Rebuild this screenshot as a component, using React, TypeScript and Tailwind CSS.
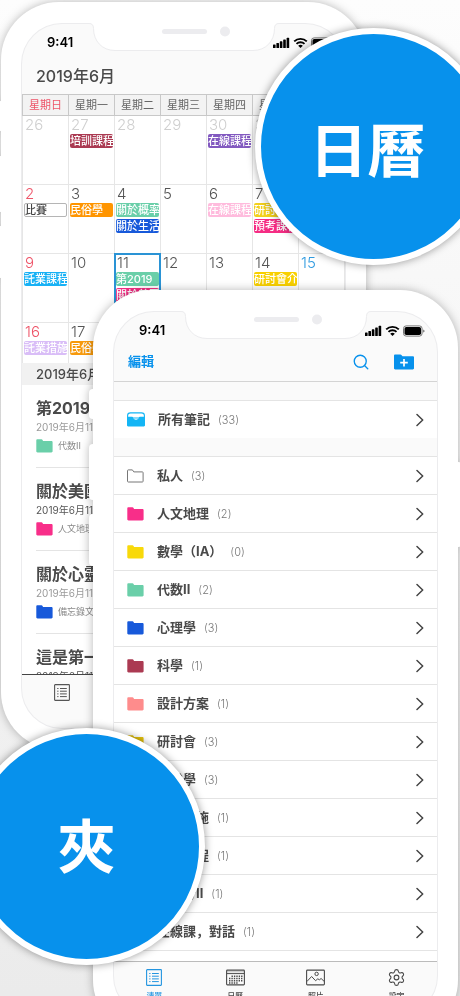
import type { ReactNode } from "react";
import { Search, Settings } from "lucide-react";

type Tag = { label: string; tone: string };
type Day = { n: number; out?: boolean; today?: boolean; tags?: Tag[] };

const weekdays = ["星期日", "星期一", "星期二", "星期三", "星期四", "星期五", "星期六"];

const weeks: Day[][] = [
  [
    { n: 26, out: true },
    { n: 27, out: true, tags: [{ label: "培訓課程", tone: "bg-[#ab3a52] text-white" }] },
    { n: 28, out: true },
    { n: 29, out: true },
    { n: 30, out: true, tags: [{ label: "在線課程", tone: "bg-[#8259c0] text-white" }] },
    { n: 31, out: true },
    { n: 1 },
  ],
  [
    { n: 2, tags: [{ label: "比賽", tone: "border border-[#b5b5b5] bg-white text-[#444]" }] },
    { n: 3, tags: [{ label: "民俗學", tone: "bg-[#ff9500] text-white" }] },
    {
      n: 4,
      tags: [
        { label: "關於概率", tone: "bg-[#6acfa9] text-white" },
        { label: "關於生活", tone: "bg-[#1759da] text-white" },
      ],
    },
    { n: 5 },
    { n: 6, tags: [{ label: "在線課程", tone: "bg-[#ffbbdd] text-white" }] },
    {
      n: 7,
      tags: [
        { label: "研討會介", tone: "bg-[#f3d01c] text-white" },
        { label: "預考課程", tone: "bg-[#f52d84] text-white" },
      ],
    },
    { n: 8 },
  ],
  [
    { n: 9, tags: [{ label: "託業課程", tone: "bg-[#17b1f5] text-white" }] },
    { n: 10 },
    {
      n: 11,
      today: true,
      tags: [
        { label: "第2019", tone: "bg-[#6acfa9] text-white" },
        { label: "關於美國", tone: "bg-[#f52d84] text-white" },
      ],
    },
    { n: 12 },
    { n: 13 },
    { n: 14, tags: [{ label: "研討會介", tone: "bg-[#f8d000] text-white" }] },
    { n: 15 },
  ],
  [
    { n: 16, tags: [{ label: "託業措施", tone: "bg-[#d9bdf7] text-white" }] },
    { n: 17, tags: [{ label: "民俗學", tone: "bg-[#f79a0c] text-white" }] },
    { n: 18 },
    { n: 19 },
    { n: 20 },
    { n: 21 },
    { n: 22 },
  ],
];

const notes = [
  { title: "第2019屆科學", date: "2019年6月11日", folder: "代数II", color: "text-[#6acfa9]", dateColor: "text-[#9a9a9a]" },
  { title: "關於美國歷史", date: "2019年6月11日", folder: "人文地理", color: "text-[#f82e89]", dateColor: "text-[#555]" },
  { title: "關於心靈成長", date: "2019年6月11日", folder: "備忘錄文", color: "text-[#1759da]", dateColor: "text-[#9a9a9a]" },
  { title: "這是第一次", date: "2019年6月11日", folder: "科學", color: "text-[#ab3a52]", dateColor: "text-[#555]" },
];

const folders = [
  { name: "私人", count: 3, color: "" },
  { name: "人文地理", count: 2, color: "text-[#f82e89]" },
  { name: "數學（IA）", count: 0, color: "text-[#f8d90a]" },
  { name: "代数II", count: 2, color: "text-[#6acfa9]" },
  { name: "心理學", count: 3, color: "text-[#1759da]" },
  { name: "科學", count: 1, color: "text-[#ab3a52]" },
  { name: "設計方案", count: 1, color: "text-[#fe8c8c]" },
  { name: "研討會", count: 3, color: "text-[#e3c00c]" },
  { name: "民俗學", count: 3, color: "text-[#ff9500]" },
  { name: "託業措施", count: 1, color: "text-[#d9bdf7]" },
  { name: "託業課程", count: 1, color: "text-[#17b1f5]" },
  { name: "微積分II", count: 1, color: "text-[#8259c0]" },
  { name: "在線課，對話", count: 1, color: "text-[#ffbbdd]" },
  { name: "在線課程", count: 1, color: "text-[#8259c0]" },
];

function FolderIcon({ color }: { color: string }) {
  return (
    <svg viewBox="0 0 17 14" className={`h-[14px] w-[17px] shrink-0 ${color || "text-[#777]"}`} aria-hidden="true">
      <path
        d={
          color
            ? "M1.2.3h4.300c.5 0 .8.2 1 .6l.6 1h8.300c.7 0 1.200.5 1.200 1.200v9.200c0 .7-.5 1.200-1.200 1.200H1.500C.8 13.500.3 13 .3 12.300V1.300C.3.700.600.3 1.200.3z"
            : "M1.200.9h4.200l1.400 2h8.600c.4 0 .7.3.7.7v8.700c0 .4-.3.7-.7.7H1.200c-.4 0-.7-.3-.7-.7V1.600c0-.4.3-.7.7-.7z"
        }
        fill={color ? "currentColor" : "none"}
        stroke={color ? "none" : "currentColor"}
      />
    </svg>
  );
}

function ListIcon() {
  return (
    <svg viewBox="0 0 16 17" className="h-[17px] w-4" fill="none" stroke="currentColor" aria-hidden="true">
      <rect x="0.6" y="0.6" width="14.8" height="15.8" rx="0.6" strokeWidth="1.1" />
      <path d="M3.200 4.500h1.300M3.200 7.200h1.300M3.200 9.900h1.300M3.200 12.600h1.300M6 4.500h6.800M6 7.200h6.800M6 9.900h6.800M6 12.600h6.800" />
    </svg>
  );
}

function CalendarIcon() {
  return (
    <svg viewBox="0 0 19 17" className="h-[17px] w-[19px]" fill="none" stroke="currentColor" aria-hidden="true">
      <rect x="0.6" y="1.1" width="17.8" height="14.8" rx="0.8" strokeWidth="1.1" />
      <path d="M.6 4.600h17.800" />
      <path d="M1 2.800h17" strokeOpacity="0.35" />
      <path d="M5.500 7.200h11M3 9.500h13.500M3 11.800h13.500M3 14h9" strokeWidth="1.4" strokeDasharray="1.400 1" />
    </svg>
  );
}

function PhotoIcon() {
  return (
    <svg viewBox="0 0 19 17" className="h-[17px] w-[19px]" fill="none" stroke="currentColor" aria-hidden="true">
      <rect x="0.6" y="1.1" width="17.8" height="14.8" rx="0.8" strokeWidth="1.1" />
      <circle cx="10.600" cy="4.900" r="1.700" />
      <path d="M.8 12.600 5.600 7.500l4 4.200 2.200-1.900 1.600 1 1.700-1.300 3.200 3" strokeLinejoin="round" />
    </svg>
  );
}

function StatusIcons() {
  return (
    <svg viewBox="0 0 60 12" className="h-3 w-[60px]" aria-label="訊號與電量">
      <rect x="0" y="7.500" width="2.600" height="3.500" rx="0.6" />
      <rect x="3.400" y="6" width="2.600" height="5" rx="0.6" />
      <rect x="6.800" y="4.300" width="2.600" height="6.700" rx="0.6" />
      <rect x="10.200" y="2.500" width="2.600" height="8.500" rx="0.6" />
      <rect x="13.600" y="0.800" width="2.600" height="10.200" rx="0.6" />
      <g fill="none" stroke="#000" strokeWidth="1.900">
        <path d="M21.200 4.400c3.500-3.400 9.100-3.400 12.600 0" />
        <path d="M23.500 6.900c2.200-2.200 5.800-2.200 8 0" />
      </g>
      <path d="M25.200 8.700c1.300-1.200 3.300-1.200 4.600 0l-2.300 2.400z" />
      <rect x="38.500" y="0.900" width="18.600" height="10.200" rx="2.600" fill="none" stroke="#777" />
      <rect x="39.500" y="1.900" width="16.600" height="8.200" rx="1.800" />
      <path d="M58.300 4.400c1.600.5 1.600 2.700 0 3.200z" fill="#555" />
    </svg>
  );
}

function Chevron() {
  return (
    <svg viewBox="0 0 8 14" className="h-[14px] w-2 text-[#444]" fill="none" stroke="currentColor" strokeWidth="1.500" aria-hidden="true">
      <path d="M1 1.500 6.700 7 1 12.500" strokeLinecap="round" strokeLinejoin="round" />
    </svg>
  );
}

function Phone({ className, children }: { className: string; children: ReactNode }) {
  return (
    <section className={`relative [grid-area:1/1] drop-shadow-[0_0_5px_rgba(0,0,0,0.28)] ${className}`}>
      {/* side keys */}
      <div className="absolute top-[99px] -left-1 h-[30px] w-2 rounded-l bg-white" />
      <div className="absolute top-[154px] -left-1 h-[56px] w-2 rounded-l bg-white" />
      <div className="absolute top-[224px] -left-1 h-[52px] w-2 rounded-l bg-white" />
      <div className="absolute top-[172px] -right-1 h-[85px] w-2 rounded-r bg-white" />
      <div className="relative flex h-[748px] flex-col rounded-[58px] bg-white px-[21px] py-[22px]">
        <div className="flex min-h-0 flex-1 flex-col overflow-hidden rounded-[40px] bg-[#fafafa] ring-1 ring-[#ececee]">
          <div className="flex h-[38px] shrink-0 items-center justify-between pr-3 pl-[25px]">
            <span className="text-[13px] font-semibold text-black">9:41</span>
            <StatusIcons />
          </div>
          {children}
        </div>
        {/* notch */}
        <svg viewBox="0 0 190 30" className="absolute top-[20px] left-1/2 h-[30px] w-[190px] -translate-x-1/2" aria-hidden="true">
          <path d="M0 0v1.500c3 0 4.500 1.500 4.500 5C4.500 19 13 28.500 26 28.500h138c13 0 21.500-9.500 21.500-22 0-3.500 1.500-5 4.500-5V0z" fill="#fff" />
          <path d="M0 1.500c3 0 4.500 1.500 4.500 5C4.500 19 13 28.500 26 28.500h138c13 0 21.500-9.500 21.500-22 0-3.500 1.500-5 4.500-5" fill="none" stroke="#ececee" />
          <rect x="73" y="7" width="45" height="5" rx="2.500" fill="#ececef" />
          <circle cx="136" cy="9.500" r="5" fill="#ececef" />
        </svg>
      </div>
    </section>
  );
}

function DayCell({ day, index }: { day: Day; index: number }) {
  let color = "text-[#555]";
  if (day.out) color = "text-[#cfcfcf]";
  else if (index === 0) color = "text-[#ee5468]";
  else if (index === 6) color = "text-[#2f9be0]";

  return (
    <td className="relative h-[69px] border border-[#e6e6e6] bg-white p-0 align-top">
      {day.today && <div className="absolute -inset-px border-2 border-[#2a93d5]" />}
      <div className={`h-[18px] pl-0.5 text-[15px] leading-[18px] font-light ${color}`}>{day.n}</div>
      <div className="flex flex-col gap-0.5 px-px">
        {day.tags?.map((t) => (
          <div key={t.label} className={`flex h-[14px] items-center overflow-hidden rounded-xs text-[11px] font-medium whitespace-nowrap ${t.tone}`}>
            {t.label}
          </div>
        ))}
      </div>
    </td>
  );
}

function CalendarPhone() {
  return (
    <Phone className="mt-0.5 mr-[94px] ml-px">
      <h1 className="h-8 shrink-0 pl-[14px] text-[16px] leading-7 font-medium text-[#4a4a4a]">2019年6月</h1>
      <div className="h-[269px] shrink-0 overflow-hidden">
        <table className="w-full table-fixed border-collapse">
          <thead>
            <tr>
              {weekdays.map((w, i) => (
                <th
                  key={w}
                  className={`h-[21px] border border-[#c8c8c8] bg-[#f3f3f3] p-0 text-[11px] leading-5 font-normal ${i === 0 ? "text-[#ee5468]" : "text-[#666]"}`}
                >
                  {w}
                </th>
              ))}
            </tr>
          </thead>
          <tbody>
            {weeks.map((week, i) => (
              <tr key={i}>
                {week.map((d, j) => (
                  <DayCell key={d.n} day={d} index={j} />
                ))}
              </tr>
            ))}
          </tbody>
        </table>
      </div>
      <h2 className="h-[22px] shrink-0 bg-[#f1f1f1] pl-[14px] text-[13px] leading-[22px] font-medium text-[#4a4a4a]">2019年6月11日</h2>
      <ul className="min-h-0 flex-1 overflow-hidden bg-white pl-[14px]">
        {notes.map((n) => (
          <li key={n.title} className="h-[83px] border-b border-[#e4e4e4] pt-3">
            <h3 className="text-[16px] leading-[22px] font-bold text-[#4a4a4a]">{n.title}</h3>
            <p className={`text-[10px] leading-4 ${n.dateColor}`}>{n.date}</p>
            <div className="flex h-[22px] items-center gap-[5px] text-[9px] text-[#888]">
              <FolderIcon color={n.color} />
              {n.folder}
            </div>
          </li>
        ))}
      </ul>
      <nav className="grid h-[54px] shrink-0 grid-cols-4 items-start border-t border-[#444] pt-[9px] text-[#555]">
        <button aria-label="清單" className="flex justify-center">
          <ListIcon />
        </button>
      </nav>
    </Phone>
  );
}

function Row({ icon, name, count }: { icon: ReactNode; name: string; count: number }) {
  return (
    <button className="flex h-[38px] w-full shrink-0 items-center border-t border-[#e4e4e4] bg-white pr-[13px] pl-[13px] text-left">
      {icon}
      <span className="ml-[13px] flex flex-1 items-baseline gap-2">
        <span className="text-[13px] font-bold text-[#4a4a4a]">{name}</span>
        <span className="text-[11px] font-light text-[#777]">({count})</span>
      </span>
      <Chevron />
    </button>
  );
}

function FolderPhone() {
  const tabs = [
    { label: "清單", icon: <ListIcon />, active: true },
    { label: "日曆", icon: <CalendarIcon /> },
    { label: "照片", icon: <PhotoIcon /> },
    { label: "設定", icon: <Settings className="size-[19px]" strokeWidth={1.4} /> },
  ];

  return (
    <Phone className="mt-[290px] mr-0.5 ml-[93px]">
      <header className="flex h-8 shrink-0 items-center border-b border-[#d4d4d4] pr-[23px] pb-[7px] pl-[14px] text-[#0791ec]">
        <button className="text-[13px] font-bold">編輯</button>
        <button aria-label="搜尋" className="mr-6 ml-auto">
          <Search className="size-[18px]" strokeWidth={1.8} />
        </button>
        <button aria-label="新增資料夾">
          <svg viewBox="0 0 20 16" className="h-4 w-5" aria-hidden="true">
            <path
              d="M1.200.5h5.200c.5 0 .8.2 1 .5L8.500 2.300h10.300c.7 0 1.200.5 1.200 1.200v10.800c0 .7-.5 1.200-1.200 1.200H1.200C.5 15.500 0 15 0 14.300V1.700C0 1 .5.5 1.200.5z"
              fill="currentColor"
            />
            <path d="M10 4.900v7.600M6.200 8.700h7.600" stroke="#fff" strokeWidth="1.700" />
          </svg>
        </button>
      </header>
      <div className="min-h-0 flex-1 overflow-hidden pt-[18px]">
        <Row
          name="所有筆記"
          count={33}
          icon={
            <svg viewBox="0 0 18 15" className="h-[15px] w-[18px] shrink-0" aria-hidden="true">
              <path d="M.6 6V3.600C.6 2 1.900.9 3.500.9h11c1.600 0 2.900 1.100 2.900 2.700V6z" fill="#fff" stroke="#13b5f5" strokeWidth="1.100" />
              <path d="M0 4.800h5.200c.4 0 .7.3.8.7.3 1.300 1.500 2.200 3 2.200s2.700-.9 3-2.200c.1-.4.4-.7.8-.7H18v8.500c0 .6-.5 1.100-1.100 1.100H1.100C.5 14.400 0 13.900 0 13.300z" fill="#13b5f5" />
            </svg>
          }
        />
        <div className="h-[18px]" />
        {folders.map((f) => (
          <Row key={f.name} name={f.name} count={f.count} icon={<FolderIcon color={f.color} />} />
        ))}
      </div>
      <nav className="grid h-[55px] shrink-0 grid-cols-4 border-t border-[#bbb] pt-1.5">
        {tabs.map((t) => (
          <button key={t.label} className={`flex flex-col items-center gap-1 text-[8px] font-medium ${t.active ? "text-[#2395e0]" : "text-[#4a4a4a]"}`}>
            <span className="flex h-[18px] items-center">{t.icon}</span>
            {t.label}
          </button>
        ))}
      </nav>
    </Phone>
  );
}

function Badge({ className, children }: { className: string; children: ReactNode }) {
  return (
    <div
      className={`absolute flex size-[237px] items-center justify-center rounded-full border-[6px] border-white bg-[#0791ec] text-[58px] leading-none font-bold text-white shadow-[0_0_8px_rgba(0,0,0,0.4)] ${className}`}
    >
      {children}
    </div>
  );
}

export default function App() {
  return (
    <main className="relative grid h-screen grid-cols-1 items-start overflow-hidden bg-linear-to-b from-[#fdfdfd] to-[#ebebeb] font-['Inter','Noto_Sans_CJK_JP',sans-serif]">
      <CalendarPhone />
      <FolderPhone />
      <Badge className="top-7 -right-8 pt-2 pr-3">日曆</Badge>
      <Badge className="top-[728px] -left-8">夾</Badge>
    </main>
  );
}
